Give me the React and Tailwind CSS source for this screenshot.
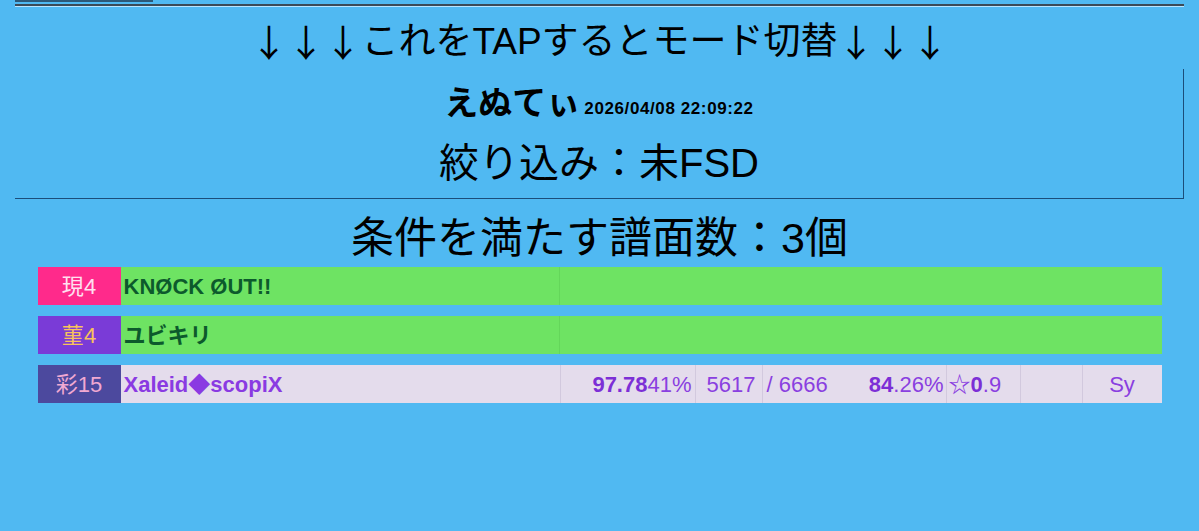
import React from "react";

const JP = { fontFamily: '"Liberation Sans", "Noto Sans CJK JP", sans-serif' };
const CJK = { fontFamily: '"Noto Sans CJK JP", sans-serif' };

function LevelCell({ bg, color, label, num }) {
  return (
    <div className={`w-[83px] shrink-0 flex items-center justify-center ${bg}`}>
      <span className={`text-[22px] ${color}`}>
        {label}
        {num}
      </span>
    </div>
  );
}

export default function App() {
  return (
    <div className="min-h-[531px] w-full bg-[#50b9f2] text-black" style={JP}>
      <div className="h-[2px] w-[138px] ml-[15px] bg-[#2c5878]" />
      <div className="mx-[15px] mt-[2px] h-[3px] border-t-2 border-b border-t-[#3c4a57] border-b-[#b8e4ff]" />
      <div className="h-[62px] pt-[6px] flex items-center justify-center text-[37px] leading-none">
        <span style={CJK}>↓↓↓</span>これをTAPするとモード切替<span style={CJK}>↓↓↓</span>
      </div>
      <div className="mx-[15px] h-[130px] border-r border-b border-[#1b4d7a] flex flex-col items-center">
        <div className="mt-[14px] h-[40px] flex items-end pb-[3px]">
          <span className="text-[34px] font-bold leading-none">えぬてぃ</span>
          <span className="ml-[4px] text-[17px] font-bold leading-none tracking-[0.6px] pb-[3px]">
            2026/04/08 22:09:22
          </span>
        </div>
        <div className="mt-[18px] h-[44px] flex items-center text-[40px] leading-none">
          絞り込み：未FSD
        </div>
      </div>
      <div className="mt-[14px] h-[50px] flex items-center justify-center text-[43px] leading-none">
        条件を満たす譜面数：3個
      </div>
      <div className="mt-[4px] mx-auto w-[1124px] flex flex-col gap-[11px] text-[22px]">
        <div className="h-[38px] flex">
          <LevelCell bg="bg-[#ff2a8b]" color="text-[#ffe0f0]" label="現" num="4" />
          <div className="w-[439px] shrink-0 bg-[#6ee363] border-r border-[#64d65a] flex items-center pl-[3px] font-bold text-[#0c5a2c]">
            KNØCK ØUT!!
          </div>
          <div className="flex-1 bg-[#6ee363]" />
        </div>
        <div className="h-[38px] flex">
          <LevelCell bg="bg-[#7a3bd7]" color="text-[#f7c25c]" label="菫" num="4" />
          <div className="w-[439px] shrink-0 bg-[#6ee363] border-r border-[#64d65a] flex items-center pl-[3px] font-bold text-[#0c5a2c]">
            ユビキリ
          </div>
          <div className="flex-1 bg-[#6ee363]" />
        </div>
        <div className="h-[38px] flex text-[#8a3fe0]">
          <LevelCell bg="bg-[#4c499e]" color="text-[#f2a9d2]" label="彩" num="15" />
          <div className="w-[440px] shrink-0 bg-[#e4dcec] border-r border-[#d2c9de] flex items-center pl-[3px] font-bold text-[#8a3ae2]">
            Xaleid◆scopiX
          </div>
          <div className="w-[135px] shrink-0 bg-[#e4dcec] border-r border-[#d2c9de] flex items-center justify-end pr-[3px]">
            <b className="text-[#7c2fd6]">97.78</b>41%
          </div>
          <div className="w-[67px] shrink-0 bg-[#e4dcec] border-r border-[#d2c9de] flex items-center justify-end pr-[6px]">
            5617
          </div>
          <div className="w-[85px] shrink-0 bg-[#e4dcec] flex items-center pl-[4px]">
            / 6666
          </div>
          <div className="w-[99px] shrink-0 bg-[#e4dcec] border-r border-[#d2c9de] flex items-center justify-end pr-[2px]">
            <b className="text-[#7c2fd6]">84</b>.26%
          </div>
          <div className="w-[74px] shrink-0 bg-[#e4dcec] border-r border-[#d2c9de] flex items-center pl-[2px]">
            ☆<b className="text-[#7c2fd6]">0</b>.9
          </div>
          <div className="w-[62px] shrink-0 bg-[#e4dcec] border-r border-[#d2c9de]" />
          <div className="flex-1 bg-[#e4dcec] flex items-center justify-center">Sy</div>
        </div>
      </div>
    </div>
  );
}
